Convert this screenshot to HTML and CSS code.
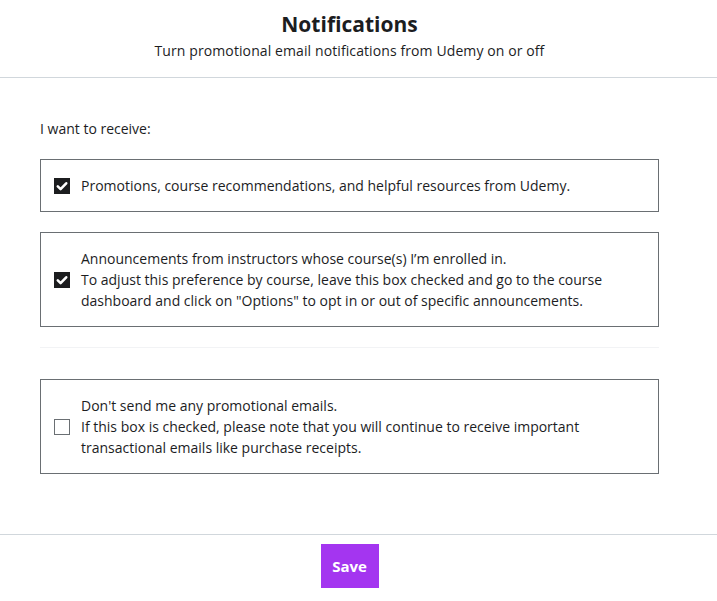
FILE: index.html
```html
<!DOCTYPE html>
<html lang="en">
<head>
<meta charset="utf-8">
<title>Notifications</title>
<link rel="stylesheet" href="styles.css">
</head>
<body>
<div class="page">
  <header class="header">
    <h1 class="title">Notifications</h1>
    <p class="subtitle">Turn promotional email notifications from Udemy on or off</p>
  </header>
  <main class="main">
    <p class="label">I want to receive:</p>
    <label class="option">
      <span class="check checked"><svg viewBox="0 0 16 16" width="16" height="16"><path d="M3.8 8.4 L6.6 11.1 L12.2 5.3" fill="none" stroke="#fff" stroke-width="2.6" stroke-linecap="round" stroke-linejoin="round"/></svg></span>
      <span class="text">Promotions, course recommendations, and helpful resources from Udemy.</span>
    </label>
    <label class="option">
      <span class="check checked"><svg viewBox="0 0 16 16" width="16" height="16"><path d="M3.8 8.4 L6.6 11.1 L12.2 5.3" fill="none" stroke="#fff" stroke-width="2.6" stroke-linecap="round" stroke-linejoin="round"/></svg></span>
      <span class="text">Announcements from instructors whose course(s) I’m enrolled in.<br>To adjust this preference by course, leave this box checked and go to the course dashboard and click on "Options" to opt in or out of specific announcements.</span>
    </label>
    <hr class="divider">
    <label class="option">
      <span class="check"></span>
      <span class="text">Don't send me any promotional emails.<br>If this box is checked, please note that you will continue to receive important transactional emails like purchase receipts.</span>
    </label>
  </main>
  <footer class="footer">
    <button class="save" type="button">Save</button>
  </footer>
</div>
</body>
</html>
```
FILE: styles.css
```css
html, body {
  margin: 0;
  padding: 0;
  background: #fff;
}
body {
  font-family: "Open Sans", "Noto Sans", sans-serif;
  color: #1c1d1f;
  font-size: 14px;
  line-height: 21px;
}
.page {
  width: 700px;
}
.header {
  text-align: center;
  padding: 10px 18px 16px 0;
  border-bottom: 1px solid #d1d7dc;
  width: 717px;
  box-sizing: border-box;
}
.title {
  margin: 0;
  font-size: 21px;
  line-height: 28px;
  font-weight: 700;
}
.subtitle {
  margin: 2px 0 0;
  letter-spacing: 0.1px;
}
.main {
  padding: 40px 41px 60px 40px;
}
.label {
  margin: 0 0 20px;
}
.option {
  display: flex;
  align-items: center;
  gap: 11px;
  border: 1px solid #6a6f73;
  padding: 15px 16px 15px 13px;
  margin-bottom: 20px;
}
.option:last-child {
  margin-bottom: 0;
}
.check {
  flex: none;
  width: 16px;
  height: 16px;
  box-sizing: border-box;
  border: 1px solid #6a6f73;
  background: #fff;
  display: block;
}
.check.checked {
  border: none;
  background: #1c1d1f;
}
.check svg {
  display: block;
}
.divider {
  border: none;
  border-top: 1px solid #f2f3f5;
  margin: 0 0 31px;
}
.footer {
  border-top: 1px solid #d1d7dc;
  width: 717px;
  box-sizing: border-box;
  padding: 9px 18px 20px 0;
  text-align: center;
}
.save {
  font-family: "Open Sans", "Noto Sans", sans-serif;
  background: #a435f0;
  color: #fff;
  border: none;
  font-weight: 700;
  font-size: 15px;
  width: 58px;
  height: 44px;
  padding: 0;
  cursor: pointer;
}
```
